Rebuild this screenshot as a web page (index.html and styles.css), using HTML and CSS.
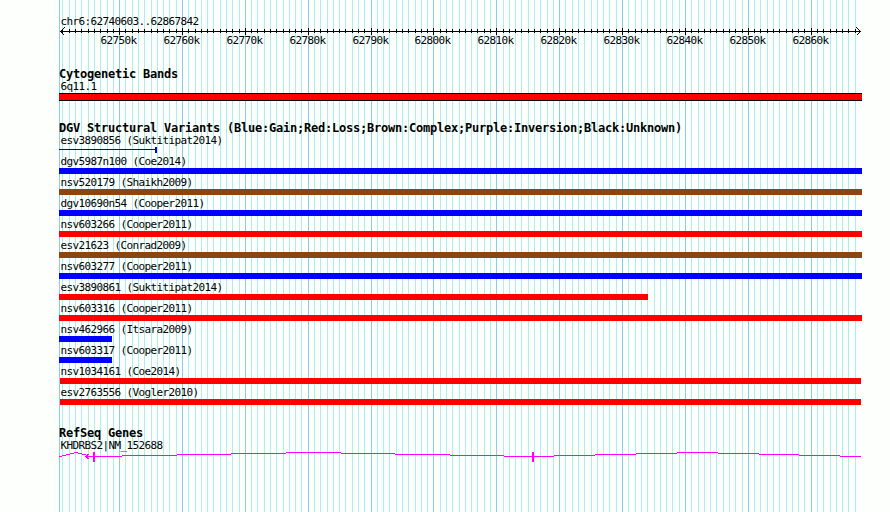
FILE: index.html
```html
<!DOCTYPE html>
<html lang="en">
<head>
    <meta charset="UTF-8">
    <title>chr6:62740603..62867842</title>
    <link rel="stylesheet" href="styles.css">
</head>
<body>
    <div class="browser">
        <svg class="grid" id="grid" width="890" height="512"></svg>

        <div class="region">chr6:62740603..62867842</div>
        <svg class="ruler" id="ruler" width="890" height="22">
            <path class="ink" d="M60 4.5H861M64.5 0.5L60.5 4.5L64.5 8.5M856.5 0.5L860.5 4.5L856.5 8.5"/>
        </svg>

        <h2 class="cyto-title">Cytogenetic Bands</h2>
        <div class="label">6q11.1</div>
        <div class="band"></div>

        <h2 class="dgv-title">DGV Structural Variants (Blue:Gain;Red:Loss;Brown:Complex;Purple:Inversion;Black:Unknown)</h2>
        <div id="variants"></div>

        <h2 class="gene-title">RefSeq Genes</h2>
        <div class="label">KHDRBS2|NM_152688</div>
        <svg class="gene" id="gene" width="890" height="12">
            <path d="M89.5 1.5L85.5 4.5L89.5 7.5"/>
            <rect x="93" y="0" width="2" height="10"/>
            <rect x="532" y="0" width="2" height="10"/>
        </svg>
    </div>

    <script>
        const start = 62740603;
        const end = 62867842;
        const svgNS = 'http://www.w3.org/2000/svg';

        function toX(bp) {
            return Math.round(60 + (bp - start) * 800 / (end - start));
        }

        function addRect(parent, cls, x, y, w, h) {
            const r = document.createElementNS(svgNS, 'rect');
            r.setAttribute('class', cls);
            r.setAttribute('x', x);
            r.setAttribute('y', y);
            r.setAttribute('width', w);
            r.setAttribute('height', h);
            parent.appendChild(r);
        }

        // grid lines and ruler ticks, one per kb
        const grid = document.getElementById('grid');
        const ruler = document.getElementById('ruler');
        addRect(grid, 'major', 59, 0, 1, 512);
        for (let kb = 62741; kb <= 62867; kb++) {
            const x = toX(kb * 1000);
            const major = kb % 10 === 0;
            addRect(grid, major ? 'major' : 'minor', x, 0, 1, 512);
            addRect(ruler, 'tick', x, major ? 1 : 2, 1, major ? 7 : 4);
            if (major) {
                const t = document.createElementNS(svgNS, 'text');
                t.setAttribute('x', x - 18.5);
                t.setAttribute('y', 17);
                t.textContent = kb + 'k';
                ruler.appendChild(t);
            }
        }

        // name, color, left, right
        const variants = [
            ['esv3890856 (Suktitipat2014)', 'partial', 59, 157],
            ['dgv5987n100 (Coe2014)', 'gain', 59, 862],
            ['nsv520179 (Shaikh2009)', 'complex', 59, 862],
            ['dgv10690n54 (Cooper2011)', 'gain', 59, 862],
            ['nsv603266 (Cooper2011)', 'loss', 59, 862],
            ['esv21623 (Conrad2009)', 'complex', 59, 862],
            ['nsv603277 (Cooper2011)', 'gain', 59, 862],
            ['esv3890861 (Suktitipat2014)', 'loss', 59, 648],
            ['nsv603316 (Cooper2011)', 'loss', 59, 862],
            ['nsv462966 (Itsara2009)', 'gain', 59, 112],
            ['nsv603317 (Cooper2011)', 'gain', 59, 112],
            ['nsv1034161 (Coe2014)', 'loss', 60, 861],
            ['esv2763556 (Vogler2010)', 'loss', 60, 861]
        ];
        const list = document.getElementById('variants');
        variants.forEach(([name, type, left, right]) => {
            const row = document.createElement('div');
            row.className = 'variant';
            row.innerHTML = `<div class="label">${name}</div>
                <div class="bar ${type}" style="margin-left:${left}px;width:${right - left}px"></div>`;
            list.appendChild(row);
        });

        // intron lines: x from, x to, y
        const introns = [
            [59, 62, 4], [62, 66, 3], [66, 70, 2], [70, 74, 1], [74, 78, 0],
            [78, 82, 1], [82, 86, 2], [86, 122, 4], [122, 177, 3], [177, 231, 2],
            [231, 286, 1], [286, 341, 0], [341, 395, 1], [395, 450, 2], [450, 504, 3],
            [504, 554, 4], [554, 595, 3], [595, 636, 2], [636, 677, 1], [677, 718, 0],
            [718, 759, 1], [759, 799, 2], [799, 840, 3], [840, 861, 4]
        ];
        const gene = document.getElementById('gene');
        introns.forEach(([a, b, y]) => addRect(gene, 'intron', a, y, b - a, 1));
    </script>
</body>
</html>
```

FILE: styles.css
```css
body {
    margin: 0;
    background-color: #fdfffc;
    color: #000;
    font-family: "DejaVu Sans Mono", monospace;
    font-size: 11px;
    letter-spacing: -0.622px;
}
.browser {
    position: relative;
    width: 890px;
    height: 512px;
    overflow: hidden;
}
.browser > * {
    position: relative;
}
svg {
    display: block;
    shape-rendering: crispEdges;
}
.browser > .grid {
    position: absolute;
    top: 0;
    left: 0;
}
.major {
    fill: #87ceeb;
}
.minor {
    fill: #afeeee;
}
.region {
    padding: 15px 0 0 60.5px;
    height: 12px;
    line-height: 13px;
}
.ink {
    fill: none;
    stroke: #000;
}
h2 {
    margin: 0 0 0 59px;
    height: 12px;
    line-height: 13px;
    font-size: 12px;
    letter-spacing: -0.224px;
    white-space: nowrap;
}
.label {
    padding-left: 60.5px;
    height: 13px;
    line-height: 13px;
    white-space: nowrap;
}
.cyto-title {
    margin-top: 19px;
}
.band {
    box-sizing: border-box;
    width: 803px;
    height: 8px;
    margin-left: 59px;
    border: solid #000;
    border-width: 1px 0;
    background-color: #f00;
}
.dgv-title {
    margin-top: 21px;
}
.variant {
    height: 21px;
}
.bar {
    height: 6px;
}
.gain {
    background-color: #00f;
}
.loss {
    background-color: #f00;
}
.complex {
    background-color: #8b4513;
}
.partial {
    box-sizing: border-box;
    border-right: 2px solid #00f;
    background: linear-gradient(#00c, #00c) 0 2px / 100% 1px no-repeat;
}
.gene-title {
    margin-top: 20px;
}
.gene rect {
    fill: #f0f;
}
.gene path {
    fill: none;
    stroke: #f0f;
}
```
